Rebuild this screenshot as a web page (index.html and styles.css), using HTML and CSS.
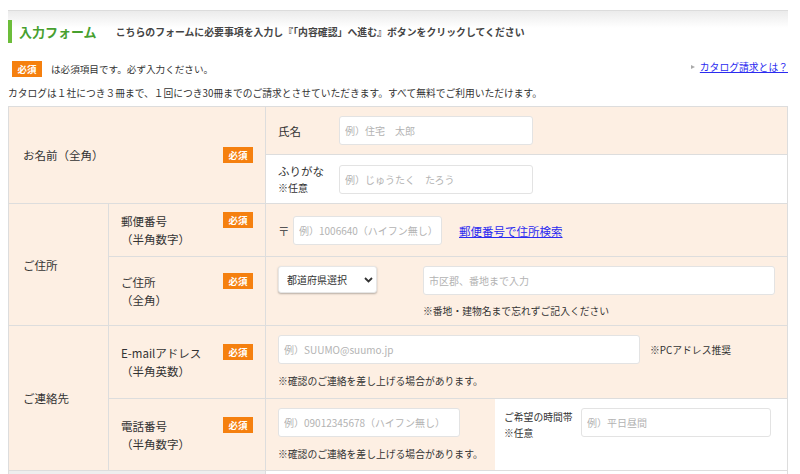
FILE: index.html
```html
<!DOCTYPE html>
<html lang="ja">
<head>
<meta charset="utf-8">
<title>入力フォーム</title>
<link rel="stylesheet" href="styles.css">
</head>
<body>
<div class="page">
  <div class="heading">
    <h1 class="heading-title">入力フォーム</h1>
    <p class="heading-lead">こちらのフォームに必要事項を入力し『「内容確認」へ進む』ボタンをクリックしてください</p>
  </div>

  <div class="notice">
    <p class="notice-req"><span class="badge">必須</span>は必須項目です。必ず入力ください。</p>
    <a class="notice-link" href="#">カタログ請求とは？</a>
  </div>
  <p class="catalog-note">カタログは１社につき３冊まで、１回につき30冊までのご請求とさせていただきます。すべて無料でご利用いただけます。</p>

  <table class="form-table">
    <colgroup><col class="col-group"><col class="col-item"><col class="col-field"></colgroup>
    <tr>
      <th colspan="2" rowspan="2" class="group">
        <div class="group-inner"><span>お名前（全角）</span><span class="badge">必須</span></div>
      </th>
      <td class="field tint cell-name">
        <div class="inline-field">
          <span class="field-label">氏名</span>
          <input class="input input-name" type="text" placeholder="例）住宅　太郎">
        </div>
      </td>
    </tr>
    <tr>
      <td class="field plain cell-kana">
        <div class="inline-field">
          <span class="field-label">ふりがな<small class="optional">※任意</small></span>
          <input class="input input-name" type="text" placeholder="例）じゅうたく　たろう">
        </div>
      </td>
    </tr>
    <tr>
      <th rowspan="2" class="group">ご住所</th>
      <th class="item item-zip"><div class="item-inner"><span>郵便番号<br>（半角数字）</span><span class="badge">必須</span></div></th>
      <td class="field tint">
        <div class="zip-row">
          <span class="zip-mark">〒</span>
          <input class="input input-zip" type="text" placeholder="例）1006640（ハイフン無し）">
          <a class="zip-link" href="#">郵便番号で住所検索</a>
        </div>
      </td>
    </tr>
    <tr>
      <th class="item"><div class="item-inner"><span>ご住所<br>（全角）</span><span class="badge">必須</span></div></th>
      <td class="field tint cell-address">
        <div class="address-row">
          <div class="select-wrap">
            <select class="select"><option>都道府県選択</option></select>
            <svg class="select-arrow" width="9" height="6" viewBox="0 0 9 6"><path d="M1 1l3.5 3.5L8 1" fill="none" stroke="#333" stroke-width="1.8"/></svg>
          </div>
          <div class="address-main">
            <input class="input input-address" type="text" placeholder="市区郡、番地まで入力">
            <p class="note">※番地・建物名まで忘れずご記入ください</p>
          </div>
        </div>
      </td>
    </tr>
    <tr>
      <th rowspan="2" class="group">ご連絡先</th>
      <th class="item"><div class="item-inner"><span>E-mailアドレス<br>（半角英数）</span><span class="badge">必須</span></div></th>
      <td class="field tint cell-mail">
        <div class="mail-row">
          <input class="input input-mail" type="text" placeholder="例）SUUMO@suumo.jp">
          <span class="side-note">※PCアドレス推奨</span>
        </div>
        <p class="note">※確認のご連絡を差し上げる場合があります。</p>
      </td>
    </tr>
    <tr>
      <th class="item"><div class="item-inner"><span>電話番号<br>（半角数字）</span><span class="badge">必須</span></div></th>
      <td class="field split">
        <div class="split-row">
          <div class="split-main">
            <input class="input input-tel" type="text" placeholder="例）09012345678（ハイフン無し）">
            <p class="note">※確認のご連絡を差し上げる場合があります。</p>
          </div>
          <div class="split-side">
            <span class="side-label">ご希望の時間帯<br>※任意</span>
            <input class="input input-time" type="text" placeholder="例）平日昼間">
          </div>
        </div>
      </td>
    </tr>
    <tr>
      <th colspan="2" class="group gray"></th>
      <td class="field plain"></td>
    </tr>
  </table>
</div>
</body>
</html>
```

FILE: styles.css
```css
* { box-sizing: border-box; }

body {
  margin: 0;
  background: #fff;
  color: #333;
  font-family: "Noto Sans CJK JP", "Noto Sans", sans-serif;
  font-size: 10px;
  overflow: hidden;
}

.page {
  width: 780px;
  margin-left: 8px;
}

/* heading */
.heading {
  margin-top: 10px;
  border-top: 1px solid #dcdcdc;
  background: linear-gradient(#ebebeb, #fff 17px);
  padding-top: 9px;
  display: flex;
  align-items: center;
}
.heading-title {
  margin: 0;
  border-left: 4px solid #6cbd3a;
  padding-left: 7px;
  line-height: 23px;
  font-size: 13px;
  font-weight: bold;
  color: #47a02f;
}
.heading-lead {
  margin: 0 0 0 19px;
  font-size: 9.9px;
  font-weight: bold;
  color: #444;
}

/* notice */
.notice {
  margin-top: 18px;
  display: flex;
  justify-content: space-between;
  align-items: flex-start;
}
.notice-req {
  margin: 0 0 0 4px;
  display: flex;
  align-items: center;
  gap: 9px;
  line-height: 16px;
  font-size: 9.6px;
}
.notice-link {
  position: relative;
  margin-top: -1px;
  font-size: 9.8px;
  line-height: 14px;
  color: #2b2bf0;
  text-decoration: underline;
}
.notice-link::before {
  content: "";
  position: absolute;
  left: -9px;
  top: 5px;
  border-left: 4px solid #aaa;
  border-top: 2.5px solid transparent;
  border-bottom: 2.5px solid transparent;
}
.catalog-note {
  margin: 8px 0 5px;
  line-height: 16px;
  font-size: 9.75px;
}

.badge {
  display: inline-block;
  width: 30px;
  height: 16px;
  line-height: 16px;
  text-align: center;
  background: #f5800f;
  color: #fff;
  font-size: 9.5px;
  font-weight: bold;
  flex-shrink: 0;
}

/* table */
.form-table {
  width: 780px;
  table-layout: fixed;
  border-collapse: collapse;
  border: 1px solid #dddddd;
}
.col-group { width: 100px; }
.col-item { width: 157px; }
.form-table th,
.form-table td {
  border: 1px solid #dddddd;
  vertical-align: middle;
  text-align: left;
  font-weight: normal;
}
.group {
  background: #fdefe3;
  padding: 0 12px 0 14px;
  font-size: 11.5px;
}
.group.gray { background: #eeeeee; height: 40px; }
.group-inner {
  display: flex;
  justify-content: space-between;
  align-items: center;
}
.item {
  background: #fdefe3;
  padding: 9px 12px 9px 12px;
  font-size: 11.5px;
}
.item-zip { padding: 8px 12px 8px 12px; }
.item-inner {
  display: flex;
  justify-content: space-between;
  align-items: flex-start;
  line-height: 18px;
}

.field { padding: 9px 12px 8px 12px; }
.tint { background: #fdefe3; }
.plain { background: #fff; }
.cell-name { border-bottom: hidden; padding: 9px 12px 9px 12px; }
.cell-kana { border-top: hidden; padding: 7px 12px 7px 12px; }
.cell-address { padding: 9px 12px 6px 12px; }
.cell-mail { padding: 9px 12px 9px 12px; }

.inline-field {
  display: flex;
  align-items: center;
}
.field-label {
  width: 61px;
  font-size: 11.5px;
  line-height: 18px;
  display: flex;
  flex-direction: column;
}
.optional {
  font-size: 10px;
  line-height: 16px;
}

.input {
  height: 29px;
  border: 1px solid #e3e3e3;
  border-radius: 3px;
  background: #fff;
  padding: 0 5px;
  font-family: inherit;
  font-size: 10px;
  color: #333;
  outline: none;
}
.input::placeholder { color: #b3b3b3; }
.input-name { width: 194px; }

.zip-row {
  display: flex;
  align-items: center;
}
.zip-mark {
  width: 15px;
  font-size: 11.5px;
  color: #555;
}
.input-zip { width: 149px; }
.zip-link {
  margin-left: 17px;
  font-size: 11.5px;
  color: #2b2bf0;
  text-decoration: underline;
}

.address-row {
  display: flex;
  align-items: flex-start;
}
.select-wrap {
  position: relative;
  width: 145px;
  flex-shrink: 0;
}
.select {
  appearance: none;
  -webkit-appearance: none;
  width: 99px;
  height: 27px;
  border: 1px solid #e6e6e6;
  border-radius: 3px;
  background: #fff;
  box-shadow: 0 1px 2px rgba(0, 0, 0, 0.28);
  padding: 0 8px;
  font-family: inherit;
  font-size: 10px;
  color: #333;
}
.select-arrow {
  position: absolute;
  left: 86px;
  top: 11px;
}
.address-main { flex: 1; }
.input-address { width: 100%; }

.note {
  margin: 9px 0 0;
  line-height: 16px;
  font-size: 9.8px;
}
.cell-address .note { margin-top: 8px; }

.mail-row {
  display: flex;
  align-items: center;
}
.input-mail { width: 362px; }
.side-note {
  margin-left: 10px;
  font-size: 9.8px;
}

.split { padding: 0; background: #fff; }
.split-row { display: flex; align-items: stretch; }
.split-main {
  width: 231px;
  background: #fdefe3;
  padding: 9px 12px 8px 12px;
}
.input-tel { width: 182px; }
.split-side {
  flex: 1;
  display: flex;
  align-items: flex-start;
  padding: 9px 16px 0 9px;
}
.side-label {
  width: 77px;
  padding-top: 1px;
  font-size: 9.8px;
  line-height: 16px;
}
.input-time { width: 190px; }
```
